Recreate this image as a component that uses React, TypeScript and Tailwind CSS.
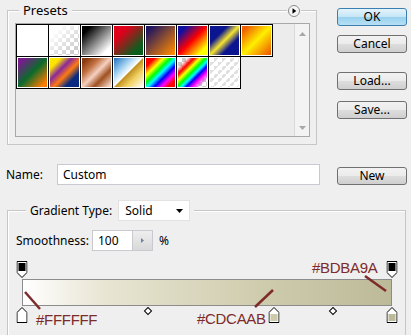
import React from "react";

const checker =
  "bg-[repeating-conic-gradient(#cccccc_0_25%,#ffffff_0_50%)] bg-[length:8px_8px]";

const presetsTop = [
  { bg: "bg-white", clear: false },
  { bg: "bg-[linear-gradient(135deg,#ffffff_15%,rgba(255,255,255,0)_85%)]", clear: true },
  { bg: "bg-[linear-gradient(135deg,#000000_15%,#ffffff_85%)]", clear: false },
  { bg: "bg-[linear-gradient(135deg,#e0001b_25%,#0b5d1e_80%)]", clear: false },
  { bg: "bg-[linear-gradient(135deg,#1e1460_10%,#ff8a00_95%)]", clear: false },
  { bg: "bg-[linear-gradient(135deg,#1010a0_15%,#ff0000_50%,#ffff00_85%)]", clear: false },
  { bg: "bg-[linear-gradient(135deg,#0c1590_30%,#f5e430_50%,#0c1590_70%)]", clear: false },
  { bg: "bg-[linear-gradient(135deg,#f06000_10%,#ffee00_50%,#f06000_95%)]", clear: false },
];

const presetsBottom = [
  { bg: "bg-[linear-gradient(135deg,#7a1a8f_10%,#0b6b2b_50%,#ff7a00_90%)]", clear: false },
  { bg: "bg-[linear-gradient(135deg,#ffe600_18%,#8a2a9a_38%,#ff7a10_56%,#0a2a80_76%)]", clear: false },
  { bg: "bg-[linear-gradient(135deg,#8a3a10_10%,#c07040_30%,#f5d0c0_50%,#a05020_70%,#f0d0c0_95%)]", clear: false },
  { bg: "bg-[linear-gradient(135deg,#1f6fc0_0%,#a0d0f0_30%,#ffffff_49%,#c09020_51%,#f0d060_70%,#ffffff_100%)]", clear: false },
  { bg: "bg-[linear-gradient(135deg,#ff0000_15%,#ffff00_30%,#00ff00_42%,#00ffff_52%,#0000ff_64%,#ff00ff_76%,#ff0000_88%)]", clear: false },
  { bg: "bg-[linear-gradient(135deg,transparent_15%,#ff0000_28%,#ffff00_38%,#00ff00_48%,#00ffff_56%,#0000ff_64%,#ff00ff_74%,transparent_88%)]", clear: true },
  { bg: "bg-[repeating-linear-gradient(135deg,rgba(255,255,255,0.95)_0_3px,rgba(255,255,255,0.4)_3px_6px)]", clear: true },
];

const Swatch = ({ bg, clear }: { bg: string; clear: boolean }) => (
  <div className="w-[33px] h-[33px] -mr-px border border-black bg-white p-px">
    <div className={`w-full h-full ${clear ? checker : ""}`}>
      <div className={`w-full h-full ${bg}`} />
    </div>
  </div>
);

const Btn = ({ label, primary, className }: { label: string; primary?: boolean; className?: string }) => (
  <div
    className={`w-[70px] h-[18px] rounded-[3px] border flex items-center justify-center leading-none ${
      primary
        ? "border-[#3c7fb1] bg-[linear-gradient(#e5f4fc_0%,#c4e5f6_50%,#98d1ef_51%,#b6e0f4_100%)]"
        : "border-[#707070] bg-[linear-gradient(#f2f2f2_0%,#ebebeb_50%,#dddddd_51%,#cfcfcf_100%)]"
    } ${className || ""}`}
  >
    {label}
  </div>
);

const TopStop = () => (
  <svg width="11" height="17" viewBox="0 0 11 17">
    <path d="M0.5 0.5H10.5V11.5L5.5 16.5L0.5 11.5Z" fill="#fff" stroke="#000" />
    <rect x="2" y="2" width="7" height="8" fill="#000" />
  </svg>
);

const BottomStop = ({ color }: { color: string }) => (
  <svg width="11" height="16" viewBox="0 0 11 16">
    <path d="M5.5 0.5L10.5 5.5V15.5H0.5V5.5Z" fill="#fff" stroke="#000" />
    <rect x="2" y="7" width="7" height="7" fill={color} />
  </svg>
);

export default function App() {
  return (
    <div className="w-[411px] h-[335px] overflow-hidden bg-[#efefef] font-['Noto_Sans',sans-serif] text-[12px] text-black">
      {/* presets + buttons */}
      <div className="flex">
        <div className="mt-[10px] ml-[7px] w-[310px] h-[135px] border border-[#c6c6c6] shadow-[inset_1px_1px_0_#fff]">
          <div className="-mt-[8px] ml-[11px] mr-[15px] flex items-center justify-between">
            <span className="bg-[#efefef] px-[4px] leading-[15px] text-[13px]">Presets</span>
            <span className="bg-[#efefef] px-[1px] flex">
              <svg width="12" height="12" viewBox="0 0 12 12">
                <circle cx="6" cy="6" r="5.5" fill="#f6f6f6" stroke="#8a8a8a" />
                <path d="M4.5 3.2L8.3 6L4.5 8.8Z" fill="#000" />
              </svg>
            </span>
          </div>
          <div className="ml-[7px] mt-[5px] w-[295px] h-[114px] border border-[#a8a8a8] bg-[#ececec] flex">
            <div className="flex-1">
              <div className="flex">
                {presetsTop.map((p, i) => (
                  <Swatch key={i} {...p} />
                ))}
              </div>
              <div className="flex -mt-px">
                {presetsBottom.map((p, i) => (
                  <Swatch key={i} {...p} />
                ))}
              </div>
            </div>
            <div className="w-[15px] border-l border-[#dadada] bg-[#f3f3f3] flex flex-col items-center justify-between pt-[8px] pb-[6px]">
              <svg width="7" height="4" viewBox="0 0 7 4">
                <path d="M0 4L3.5 0L7 4Z" fill="#a8a8a8" />
              </svg>
              <svg width="7" height="4" viewBox="0 0 7 4">
                <path d="M0 0L3.5 4L7 0Z" fill="#a8a8a8" />
              </svg>
            </div>
          </div>
        </div>
        <div className="ml-[20px] flex flex-col">
          <Btn label="OK" primary className="mt-[8px]" />
          <Btn label="Cancel" className="mt-[9px]" />
          <Btn label="Load..." className="mt-[19px]" />
          <Btn label="Save..." className="mt-[11px]" />
        </div>
      </div>

      {/* name row */}
      <div className="mt-[19px] pl-[6px] h-[21px] flex items-center">
        <span className="w-[51px]">Name:</span>
        <div className="w-[263px] h-[21px] bg-white border border-[#c9cacf] pl-[5px] flex items-center">
          Custom
        </div>
        <Btn label="New" className="ml-[17px] mt-[2px]" />
      </div>

      {/* gradient group */}
      <div className="mt-[25px] ml-[7px] w-[399px] h-[140px] border border-[#c6c6c6] shadow-[inset_1px_1px_0_#fff]">
        <div className="-mt-[11px] ml-[18px] w-fit px-[4px] bg-[#efefef] flex items-center">
          <span>Gradient Type:</span>
          <div className="ml-[6px] w-[72px] h-[21px] bg-white border border-[#e2e2e2] pl-[6px] pr-[6px] flex items-center justify-between">
            <span>Solid</span>
            <svg width="7" height="4" viewBox="0 0 7 4">
              <path d="M0 0H7L3.5 4Z" fill="#000" />
            </svg>
          </div>
        </div>

        <div className="mt-[9px] ml-[8px] flex items-center">
          <span className="w-[76px]">Smoothness:</span>
          <div className="w-[61px] h-[21px] bg-white border border-[#c9cacf] flex">
            <span className="flex-1 pl-[5px] flex items-center">100</span>
            <div className="w-[20px] border-l border-[#c9cacf] bg-[linear-gradient(#eeeeee,#d9d9d9)] flex items-center justify-center">
              <svg width="3" height="5" viewBox="0 0 3 5">
                <path d="M0 0L3 2.5L0 5Z" fill="#6d82a0" />
              </svg>
            </div>
          </div>
          <span className="ml-[6px]">%</span>
        </div>

        {/* gradient editor */}
        <div className="relative mt-[10px] ml-[14px] w-[370px]">
          <div className="relative h-[17px]">
            <div className="absolute top-0 left-0 -translate-x-1/2 flex">
              <TopStop />
            </div>
            <div className="absolute top-0 left-full -translate-x-1/2 flex">
              <TopStop />
            </div>
          </div>
          <div className="mt-[1px] h-[27px] border border-[#8c8c8c] bg-[linear-gradient(to_right,#ffffff_0%,#e8e5d3_22%,#cdcaab_68%,#bdba9a_100%)]" />
          <div className="relative h-[18px]">
            <div className="absolute top-[1px] left-0 -translate-x-1/2 flex">
              <BottomStop color="#ffffff" />
            </div>
            <div className="absolute top-[2px] left-[34%] w-[6px] h-[6px] -translate-x-1/2 rotate-45 border border-black bg-white" />
            <div className="absolute top-[1px] left-[68%] -translate-x-1/2 flex">
              <BottomStop color="#cdcaab" />
            </div>
            <div className="absolute top-[2px] left-[84%] w-[6px] h-[6px] -translate-x-1/2 rotate-45 border border-black bg-white" />
            <div className="absolute top-[1px] left-full -translate-x-1/2 flex">
              <BottomStop color="#bdba9a" />
            </div>
          </div>

          {/* annotations */}
          <svg className="absolute top-0 left-0 overflow-visible" width="370" height="70" viewBox="0 0 370 70">
            <line x1="3" y1="31" x2="18" y2="48" stroke="#7d2b2b" strokeWidth="2.5" />
            <line x1="233" y1="46" x2="251" y2="29" stroke="#7d2b2b" strokeWidth="2.5" />
            <line x1="343" y1="15" x2="364" y2="30" stroke="#7d2b2b" strokeWidth="2.5" />
          </svg>
          <span className="absolute top-[51px] left-[14px] font-['Liberation_Sans',sans-serif] text-[15px] leading-[16px] tracking-[-0.3px] text-[#7d2b2b]">
            #FFFFFF
          </span>
          <span className="absolute top-[50px] left-[175px] font-['Liberation_Sans',sans-serif] text-[15px] leading-[16px] tracking-[-0.3px] text-[#7d2b2b]">
            #CDCAAB
          </span>
          <span className="absolute -top-[1px] left-[290px] font-['Liberation_Sans',sans-serif] text-[15px] leading-[16px] tracking-[-0.3px] text-[#7d2b2b]">
            #BDBA9A
          </span>
        </div>
      </div>
    </div>
  );
}
